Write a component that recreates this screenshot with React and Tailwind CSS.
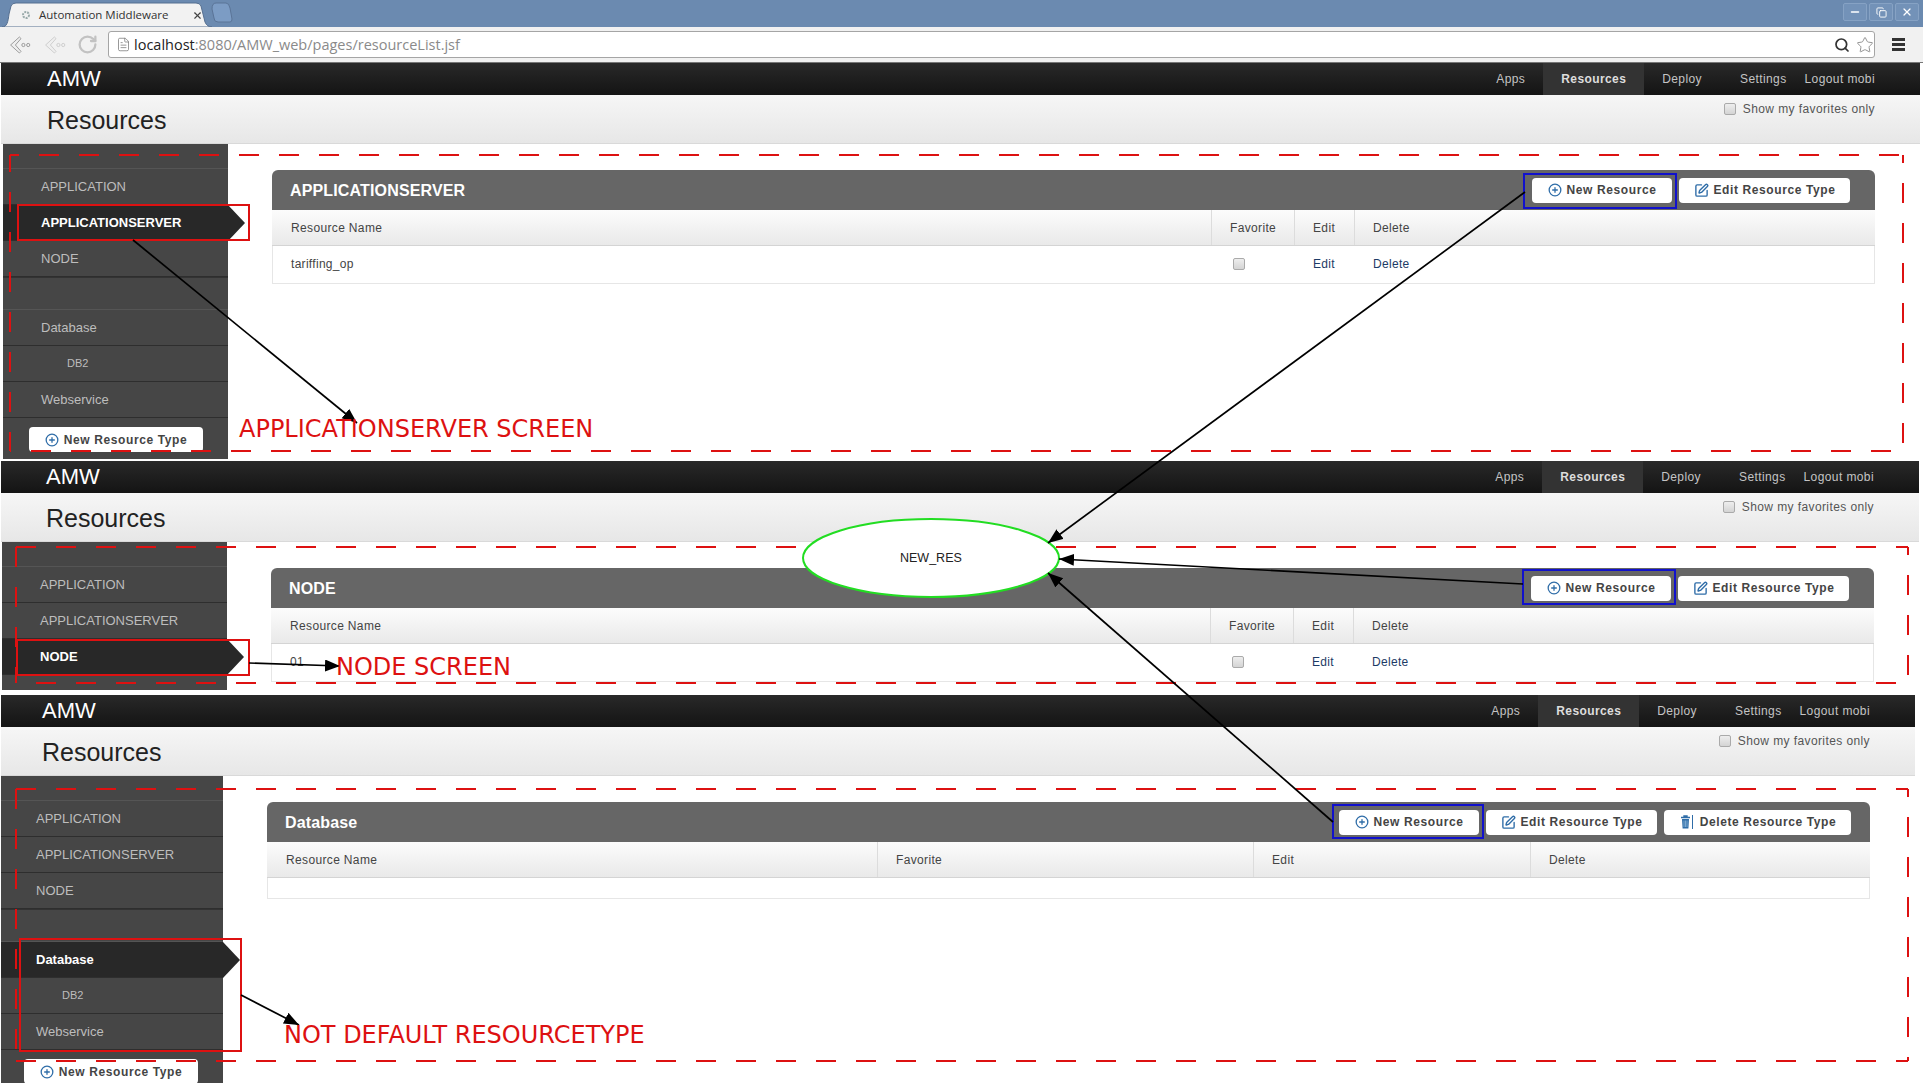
import React from 'react';
import { CirclePlus, Copy, FileText, Minus, RotateCw, Search, SquarePen, Star, X } from 'lucide-react';

const sans = 'font-["Liberation_Sans",Arial,sans-serif]';

const allSideItems = ['APPLICATION', 'APPLICATIONSERVER', 'NODE', null, 'Database', 'DB2', 'Webservice'];

// each screen is a cropped copy of the app, slid a few px to the left
const screens = [
  {
    key: 'appserver',
    wrap: 'h-[396px] w-[1919px]',
    shift: '-ml-px',
    active: 'APPLICATIONSERVER',
    title: 'APPLICATIONSERVER',
    cols: 'grid-cols-[939px_83px_60px_1fr]',
    btnPad: 'pr-[25px]',
    rows: [{ name: 'tariffing_op' }],
    sideItems: allSideItems,
    gap: 'h-[2px]',
  },
  {
    key: 'node',
    wrap: 'h-[229px] w-[1919px]',
    shift: '-ml-[2px]',
    active: 'NODE',
    title: 'NODE',
    cols: 'grid-cols-[939px_83px_60px_1fr]',
    btnPad: 'pr-[25px]',
    rows: [{ name: '01' }],
    sideItems: allSideItems.slice(0, 3),
    noSideButton: true,
    gap: 'h-[5px]',
  },
  {
    key: 'database',
    wrap: 'h-[388px] w-[1915px]',
    shift: '-ml-[6px]',
    active: 'Database',
    title: 'Database',
    cols: 'grid-cols-[610px_376px_277px_1fr]',
    btnPad: 'pr-[19px]',
    rows: [],
    sideItems: allSideItems,
    canDelete: true,
    gap: 'h-0',
  },
];

const TrashIcon = () => (
  <svg width="16" height="16" viewBox="0 0 16 16" className="shrink-0">
    <path d="M2 3.5h9M5 3.5V2h3v1.5" stroke="#2f6da8" strokeWidth="1.4" fill="none" />
    <path d="M3 5h7l-.6 9.5H3.6z" fill="#2f6da8" />
    <path d="M5 6.5v6.5M6.5 6.5v6.5M8 6.5v6.5" stroke="#9cc0e0" strokeWidth="0.7" />
    <path d="M13.5 1v14" stroke="#2f6da8" strokeWidth="1" />
  </svg>
);

const ActionButton = ({ icon, label, className = '' }) => (
  <div
    className={`flex h-[25px] items-center justify-center gap-[5px] rounded-[4px] bg-white text-[12px] font-bold tracking-[0.6px] text-[#444] ${className}`}
  >
    {icon}
    <span>{label}</span>
  </div>
);

const plus = <CirclePlus size={14} strokeWidth={2.2} className="shrink-0 text-[#2f6da8]" />;
const pen = <SquarePen size={15} strokeWidth={2.2} className="shrink-0 text-[#2f6da8]" />;

const NavBar = () => (
  <div className="flex h-8 items-center justify-between bg-gradient-to-b from-[#292929] to-[#141414] pl-[47px] pr-[45px]">
    <div className="text-[22px] leading-none text-white">AMW</div>
    <div className="flex h-full items-center text-[12px] tracking-[0.4px] text-[#c4c4c4]">
      <div className="px-[18px]">Apps</div>
      <div className="flex h-full items-center bg-[#333] px-[18px] font-bold text-[#ddd]">Resources</div>
      <div className="pl-[18px] pr-[20px]">Deploy</div>
      <div className="pl-[18px] pr-[16px]">Settings</div>
      <div className="ml-[2px]">Logout mobi</div>
    </div>
  </div>
);

const Checkbox = () => (
  <span className="block h-3 w-3 rounded-[2px] border border-[#aaa] bg-gradient-to-b from-[#eee] to-[#d4d4d4]" />
);

const PageHeader = () => (
  <div className="flex h-[49px] justify-between border-b border-[#d9d9d9] bg-gradient-to-b from-[#f6f6f6] to-[#e7e7e7] pl-[47px] pr-[45px]">
    <div className="pt-[10px] text-[25px] leading-[30px] text-[#222]">Resources</div>
    <div className="flex h-[27px] items-center gap-[7px] text-[12px] tracking-[0.4px] text-[#555]">
      <Checkbox />
      <span>Show my favorites only</span>
    </div>
  </div>
);

const SideRow = ({ label, active }) => {
  if (label === null) {
    return <div className="h-[33px] border-b border-t border-b-[#555] border-t-[#333]" />;
  }
  const sub = label === 'DB2';
  return (
    <div
      className={`relative flex h-9 items-center border-b border-[#2e2e2e] ${sub ? 'pl-[64px] text-[11px]' : 'pl-[38px] text-[13px]'} ${
        active ? 'bg-[#282828] text-[12px] font-bold text-white' : 'text-[#bdbdbd]'
      }`}
    >
      {label}
      {active && (
        <span className="absolute left-full top-0 border-y-[18px] border-l-[17px] border-y-transparent border-l-[#282828]" />
      )}
    </div>
  );
};

const Sidebar = ({ active, items, noButton }) => (
  <div className="ml-[3px] w-[225px] shrink-0 bg-[#464646] pt-[24px]">
    <div className="border-t border-[#555]" />
    {items.map((item, i) => (
      <SideRow key={i} label={item} active={item === active} />
    ))}
    {!noButton && (
      <div className="px-[26px] pt-[9px]">
        <ActionButton icon={plus} label="New Resource Type" className="w-[174px]" />
      </div>
    )}
  </div>
);

const ResourcePanel = ({ title, cols, rows, canDelete, btnPad }) => {
  const headers = ['Resource Name', 'Favorite', 'Edit', 'Delete'];
  return (
    <div className="w-[1603px]">
      <div className={`flex h-10 items-center justify-between rounded-t-[6px] bg-[#666] pl-[18px] ${btnPad}`}>
        <span className="pt-px text-[16px] font-bold tracking-[0.15px] text-white">{title}</span>
        <div className="flex gap-[7px]">
          <ActionButton icon={plus} label="New Resource" className="w-[140px]" />
          <ActionButton icon={pen} label="Edit Resource Type" className="w-[171px]" />
          {canDelete && <ActionButton icon={<TrashIcon />} label="Delete Resource Type" className="w-[187px]" />}
        </div>
      </div>
      <div className={`grid h-9 border-b border-[#d4d4d4] bg-gradient-to-b from-[#fcfcfc] to-[#e9e9e9] text-[12px] tracking-[0.35px] text-[#444] ${cols}`}>
        {headers.map((h, i) => (
          <div key={h} className={`flex items-center ${i > 0 ? 'border-l border-[#dcdcdc] pl-[18px]' : 'pl-[19px]'}`}>
            {h}
          </div>
        ))}
      </div>
      <div className="border-x border-b border-[#e6e6e6]">
        {rows.length === 0 && <div className="h-5" />}
        {rows.map((row) => (
          <div key={row.name} className={`grid h-[37px] items-center pb-[2px] text-[12px] tracking-[0.3px] ${cols}`}>
            <div className="pl-[18px] text-[#444]">{row.name}</div>
            <div className="pl-[21px]">
              <Checkbox />
            </div>
            <div className="pl-[18px] text-[#1d3b66]">Edit</div>
            <div className="pl-[18px] text-[#1d3b66]">Delete</div>
          </div>
        ))}
      </div>
    </div>
  );
};

const Screen = ({ wrap, shift, active, title, cols, rows, canDelete, btnPad, gap, sideItems, noSideButton }) => (
  <>
    <div className={`ml-px overflow-hidden ${wrap}`}>
      <div className={`w-[1920px] ${shift}`}>
        <NavBar />
        <PageHeader />
        <div className="flex min-h-[400px]">
          <Sidebar active={active} items={sideItems} noButton={noSideButton} />
          <div className="pl-[44px] pt-[26px]">
            <ResourcePanel title={title} cols={cols} rows={rows} canDelete={canDelete} btnPad={btnPad} />
          </div>
        </div>
      </div>
    </div>
    <div className={gap} />
  </>
);

const BackArrow = ({ faded }) => (
  <svg width="24" height="24" viewBox="0 0 30 24" className={faded ? 'opacity-40' : ''}>
    <path d="M13 2 L2 12 L13 22 L15 20 L8 12 L15 4 Z" fill="#eee" stroke="#999" strokeWidth="1.2" />
    <circle cx="18" cy="12" r="2" fill="none" stroke="#888" strokeWidth="1" />
    <circle cx="24" cy="12" r="2" fill="none" stroke="#888" strokeWidth="1" />
  </svg>
);

const TabIcon = () => (
  <svg width="10" height="10" viewBox="0 0 10 10" className="mr-[8px] shrink-0">
    <circle cx="5" cy="5" r="3" fill="none" stroke="#9aa" strokeWidth="2" strokeDasharray="2 1" />
  </svg>
);

const BrowserChrome = () => (
  <div className="h-[63px]">
    <div className="relative flex h-[27px] bg-[#6b8ab0]">
      <svg width="240" height="27" viewBox="0 0 240 27" className="absolute left-0 top-0">
        <path d="M2 27 C7 27 8 22 9 14 L11 6 Q12 3 16 3 H196 Q200 3 201 6 L205 22 Q207 27 212 27 Z" fill="#f2f2f2" stroke="#556f90" />
        <path d="M212 9 Q212 3 216 3 H226 Q229 3 230 8 L232 19 Q232 22 230 22 H218 Q214 22 214 18 Z" fill="#7c9cc4" stroke="#5a7497" />
      </svg>
      <div className="relative flex h-full w-[210px] items-center pl-[21px] pt-[3px] font-['Open_Sans',sans-serif] text-[11.5px] text-[#333]">
        <TabIcon />
        <span>Automation Middleware</span>
        <X size={11} strokeWidth={2.5} className="ml-[24px] text-[#444]" />
      </div>
      <div className="ml-auto flex gap-[2px] pr-[4px] pt-[3px]">
        {[0, 1, 2].map((i) => (
          <div key={i} className="flex h-[18px] w-[24px] items-center justify-center rounded-[2px] border border-[#86a2c4] bg-[#7392b8] text-white">
            {i === 0 && <Minus size={12} strokeWidth={3} />}
            {i === 1 && <Copy size={11} strokeWidth={2} />}
            {i === 2 && <X size={12} strokeWidth={2.5} />}
          </div>
        ))}
      </div>
    </div>
    <div className="flex h-9 items-center border-b border-[#777] bg-[#f1f1f1] pl-[9px] pr-[18px]">
      <BackArrow />
      <div className="ml-[11px]">
        <BackArrow faded />
      </div>
      <RotateCw size={21} strokeWidth={2.6} className="ml-[9px] text-[#c2c2c2]" />
      <div className="ml-[10px] flex h-[27px] flex-1 items-center rounded-[3px] border border-[#a5a5a5] bg-white pl-[7px] pr-0 font-['Open_Sans',sans-serif] text-[14.5px]">
        <FileText size={15} strokeWidth={1.2} className="mr-[3px] text-[#777]" />
        <span className="text-[#222]">localhost</span>
        <span className="text-[#8a8a8a]">:8080/AMW_web/pages/resourceList.jsf</span>
        <Search size={16} strokeWidth={2.6} className="ml-auto text-[#333]" />
        <Star size={18} strokeWidth={1.2} className="ml-[6px] text-[#888]" />
      </div>
      <div className="ml-[17px] flex w-[13px] flex-col gap-[2px]">
        <span className="h-[3px] bg-[#333]" />
        <span className="h-[3px] bg-[#333]" />
        <span className="h-[3px] bg-[#333]" />
      </div>
    </div>
  </div>
);

// [x1, y1, x2, y2, dash offset]
const dashes = [
  [10, 155, 1903, 155, 11],
  [10, 155, 10, 451, 3],
  [1903, 155, 1903, 451, 12],
  [10, 451, 1903, 451, 19],
  [16, 547, 1908, 547, 0],
  [16, 547, 16, 683, 0],
  [1908, 547, 1908, 683, 12],
  [16, 683, 1896, 683, 20],
  [16, 789, 1908, 789, 0],
  [16, 789, 16, 1061, 0],
  [1908, 789, 1908, 1061, 12],
  [16, 1061, 1908, 1061, 0],
];

// [x, y, w, h, colour]
const boxes = [
  [18, 205, 231, 35, '#dd1111'],
  [17, 640, 232, 35, '#dd1111'],
  [20, 939, 221, 112, '#dd1111'],
  [1524, 174, 152, 34, '#1111cc'],
  [1523, 570, 152, 34, '#1111cc'],
  [1333, 805, 150, 33, '#1111cc'],
];

const arrows = [
  [133, 240, 357, 423],
  [1525, 192, 1048, 543],
  [1523, 584, 1059, 559],
  [1333, 822, 1048, 573],
  [249, 663, 340, 666],
  [241, 995, 299, 1025],
];

const Annotations = () => (
  <svg width="1923" height="1083" viewBox="0 0 1923 1083" className="pointer-events-none absolute left-0 top-0">
    <defs>
      <marker id="head" markerUnits="userSpaceOnUse" markerWidth="16" markerHeight="14" refX="15" refY="6" orient="auto">
        <path d="M0 0 L15 6 L0 12 Z" fill="#000" />
      </marker>
    </defs>
    {dashes.map(([x1, y1, x2, y2, off], i) => (
      <line key={i} x1={x1} y1={y1} x2={x2} y2={y2} stroke="#dd1111" strokeWidth="2" strokeDasharray="20 20" strokeDashoffset={off} />
    ))}
    {boxes.map(([x, y, w, h, c], i) => (
      <rect key={i} x={x} y={y} width={w} height={h} fill="none" stroke={c} strokeWidth="2" />
    ))}
    <ellipse cx="931" cy="558" rx="128" ry="39" fill="#fff" stroke="#22dd22" strokeWidth="2" />
    {arrows.map(([x1, y1, x2, y2], i) => (
      <line key={i} x1={x1} y1={y1} x2={x2} y2={y2} stroke="#000" strokeWidth="1.7" markerEnd="url(#head)" />
    ))}
  </svg>
);

const Label = ({ className, children }) => (
  <div className={`absolute whitespace-nowrap font-['DejaVu_Sans',sans-serif] text-[24px] leading-none text-[#dd1111] ${className}`}>
    {children}
  </div>
);

export default function App() {
  return (
    <div className={`relative h-[1083px] w-[1923px] overflow-hidden bg-white ${sans}`}>
      <BrowserChrome />
      {screens.map(({ key, ...s }) => (
        <Screen key={key} {...s} />
      ))}
      <Annotations />
      <Label className="left-[239px] top-[417px]">APPLICATIONSERVER SCREEN</Label>
      <Label className="left-[336px] top-[655px]">NODE SCREEN</Label>
      <Label className="left-[284px] top-[1023px]">NOT DEFAULT RESOURCETYPE</Label>
      <div className="absolute left-[900px] top-[551px] text-[12.5px] leading-[14px] text-[#222]">NEW_RES</div>
    </div>
  );
}
